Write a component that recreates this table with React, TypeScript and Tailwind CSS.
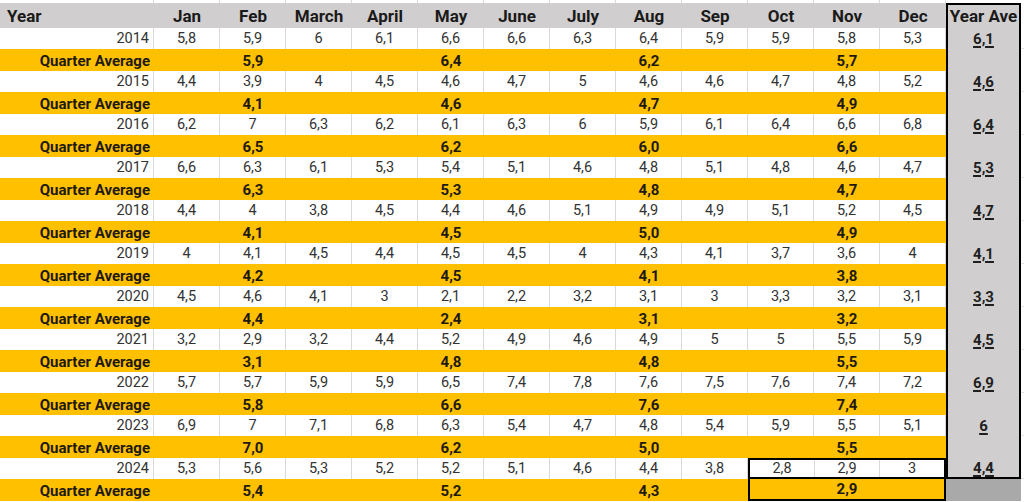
import React from "react";

const months = ["Jan", "Feb", "March", "April", "May", "June", "July", "Aug", "Sep", "Oct", "Nov", "Dec"];

type Row = { year: string; vals: string[]; ave: string; q: string[] };

const data: Row[] = [
  { year: "2014", vals: ["5,8", "5,9", "6", "6,1", "6,6", "6,6", "6,3", "6,4", "5,9", "5,9", "5,8", "5,3"], ave: "6,1", q: ["5,9", "6,4", "6,2", "5,7"] },
  { year: "2015", vals: ["4,4", "3,9", "4", "4,5", "4,6", "4,7", "5", "4,6", "4,6", "4,7", "4,8", "5,2"], ave: "4,6", q: ["4,1", "4,6", "4,7", "4,9"] },
  { year: "2016", vals: ["6,2", "7", "6,3", "6,2", "6,1", "6,3", "6", "5,9", "6,1", "6,4", "6,6", "6,8"], ave: "6,4", q: ["6,5", "6,2", "6,0", "6,6"] },
  { year: "2017", vals: ["6,6", "6,3", "6,1", "5,3", "5,4", "5,1", "4,6", "4,8", "5,1", "4,8", "4,6", "4,7"], ave: "5,3", q: ["6,3", "5,3", "4,8", "4,7"] },
  { year: "2018", vals: ["4,4", "4", "3,8", "4,5", "4,4", "4,6", "5,1", "4,9", "4,9", "5,1", "5,2", "4,5"], ave: "4,7", q: ["4,1", "4,5", "5,0", "4,9"] },
  { year: "2019", vals: ["4", "4,1", "4,5", "4,4", "4,5", "4,5", "4", "4,3", "4,1", "3,7", "3,6", "4"], ave: "4,1", q: ["4,2", "4,5", "4,1", "3,8"] },
  { year: "2020", vals: ["4,5", "4,6", "4,1", "3", "2,1", "2,2", "3,2", "3,1", "3", "3,3", "3,2", "3,1"], ave: "3,3", q: ["4,4", "2,4", "3,1", "3,2"] },
  { year: "2021", vals: ["3,2", "2,9", "3,2", "4,4", "5,2", "4,9", "4,6", "4,9", "5", "5", "5,5", "5,9"], ave: "4,5", q: ["3,1", "4,8", "4,8", "5,5"] },
  { year: "2022", vals: ["5,7", "5,7", "5,9", "5,9", "6,5", "7,4", "7,8", "7,6", "7,5", "7,6", "7,4", "7,2"], ave: "6,9", q: ["5,8", "6,6", "7,6", "7,4"] },
  { year: "2023", vals: ["6,9", "7", "7,1", "6,8", "6,3", "5,4", "4,7", "4,8", "5,4", "5,9", "5,5", "5,1"], ave: "6", q: ["7,0", "6,2", "5,0", "5,5"] },
  { year: "2024", vals: ["5,3", "5,6", "5,3", "5,2", "5,2", "5,1", "4,6", "4,4", "3,8", "2,8", "2,9", "3"], ave: "4,4", q: ["5,4", "5,2", "4,3", "2,9"] },
];

const font = { fontFamily: "Roboto, Lato, 'Open Sans', Arial, sans-serif" };

function YearRow({ r, last }: { r: Row; last: boolean }) {
  const cells = last ? r.vals.slice(0, 9) : r.vals;
  return (
    <div className="flex h-[21px] bg-white text-[14.5px] text-[#333333] leading-none">
      <div className="w-[154px] shrink-0 border-r border-[#d9d9d9] flex items-center justify-end pr-[4px] pt-[2px]">{r.year}</div>
      {cells.map((v, i) => (
        <div key={i} className="w-[66px] shrink-0 border-r border-[#d9d9d9] flex items-center justify-center pt-[2px]">
          {v}
        </div>
      ))}
      {last && (
        <div className="w-[198px] shrink-0 flex border-2 border-black">
          {r.vals.slice(9).map((v, i) => (
            <div key={i} className={`flex-1 flex items-center justify-center pt-[1px] ${i < 2 ? "border-r border-[#d9d9d9]" : ""}`}>
              {v}
            </div>
          ))}
        </div>
      )}
      <div className={`w-[75px] shrink-0 bg-[#d0cece] border-x-2 border-black flex items-center justify-center pt-[2px] font-bold text-[15px] text-[#1f1f1f] ${last ? "border-b-2" : ""}`}>
        <span className="underline underline-offset-2 decoration-[1.5px]">{r.ave}</span>
      </div>
      <div className="flex-1 border-b border-[#e5e5e5]" />
    </div>
  );
}

function QuarterRow({ r, last }: { r: Row; last: boolean }) {
  const qCells = [0, 1, 2, 3, 4, 5, 6, 7, 8];
  const qMap: Record<number, string> = { 1: r.q[0], 4: r.q[1], 7: r.q[2], 10: r.q[3] };
  const cols = last ? qCells : [...qCells, 9, 10, 11];
  return (
    <div className="flex h-[22px] text-[15px] font-bold text-[#1e1a10] leading-none">
      <div className="flex bg-[#ffc000]">
        <div className="w-[154px] shrink-0 flex items-center justify-end pr-[4px] pt-[2px]">Quarter Average</div>
        {cols.map((i) => (
          <div key={i} className="w-[66px] shrink-0 flex items-center justify-center pt-[2px]">
            {qMap[i] ?? ""}
          </div>
        ))}
        {last && (
          <div className="w-[198px] shrink-0 flex items-center justify-center border-x-2 border-b-2 border-black">
            {r.q[3]}
          </div>
        )}
      </div>
      {last ? (
        <div className="w-[75px] shrink-0 bg-[#a9a9a9]" />
      ) : (
        <div className="w-[75px] shrink-0 bg-[#d0cece] border-x-2 border-black" />
      )}
      <div className="flex-1" />
    </div>
  );
}

export default function App() {
  return (
    <div className="w-[1024px] h-[502px] overflow-hidden bg-white" style={font}>
      <div className="flex h-[3px]">
        <div className="w-[154px] shrink-0 border-r border-[#d9d9d9]" />
        {months.map((m) => (
          <div key={m} className="w-[66px] shrink-0 border-r border-[#d9d9d9]" />
        ))}
        <div className="w-[75px] shrink-0" />
      </div>
      <div className="flex h-[25px] text-[17px] font-bold text-[#1a1a1a] leading-none">
        <div className="flex bg-[#d0cece]">
          <div className="w-[154px] shrink-0 flex items-center pl-[7px] pt-[1px]">Year</div>
          {months.map((m) => (
            <div key={m} className="w-[66px] shrink-0 flex items-center justify-center pt-[1px]">
              {m}
            </div>
          ))}
        </div>
        <div className="w-[75px] shrink-0 bg-[#d0cece] border-x-2 border-t-2 border-black flex items-center justify-center whitespace-nowrap">
          Year Ave
        </div>
        <div className="flex-1" />
      </div>
      {data.map((r, idx) => {
        const last = idx === data.length - 1;
        return (
          <React.Fragment key={r.year}>
            <YearRow r={r} last={last} />
            <QuarterRow r={r} last={last} />
          </React.Fragment>
        );
      })}
    </div>
  );
}
